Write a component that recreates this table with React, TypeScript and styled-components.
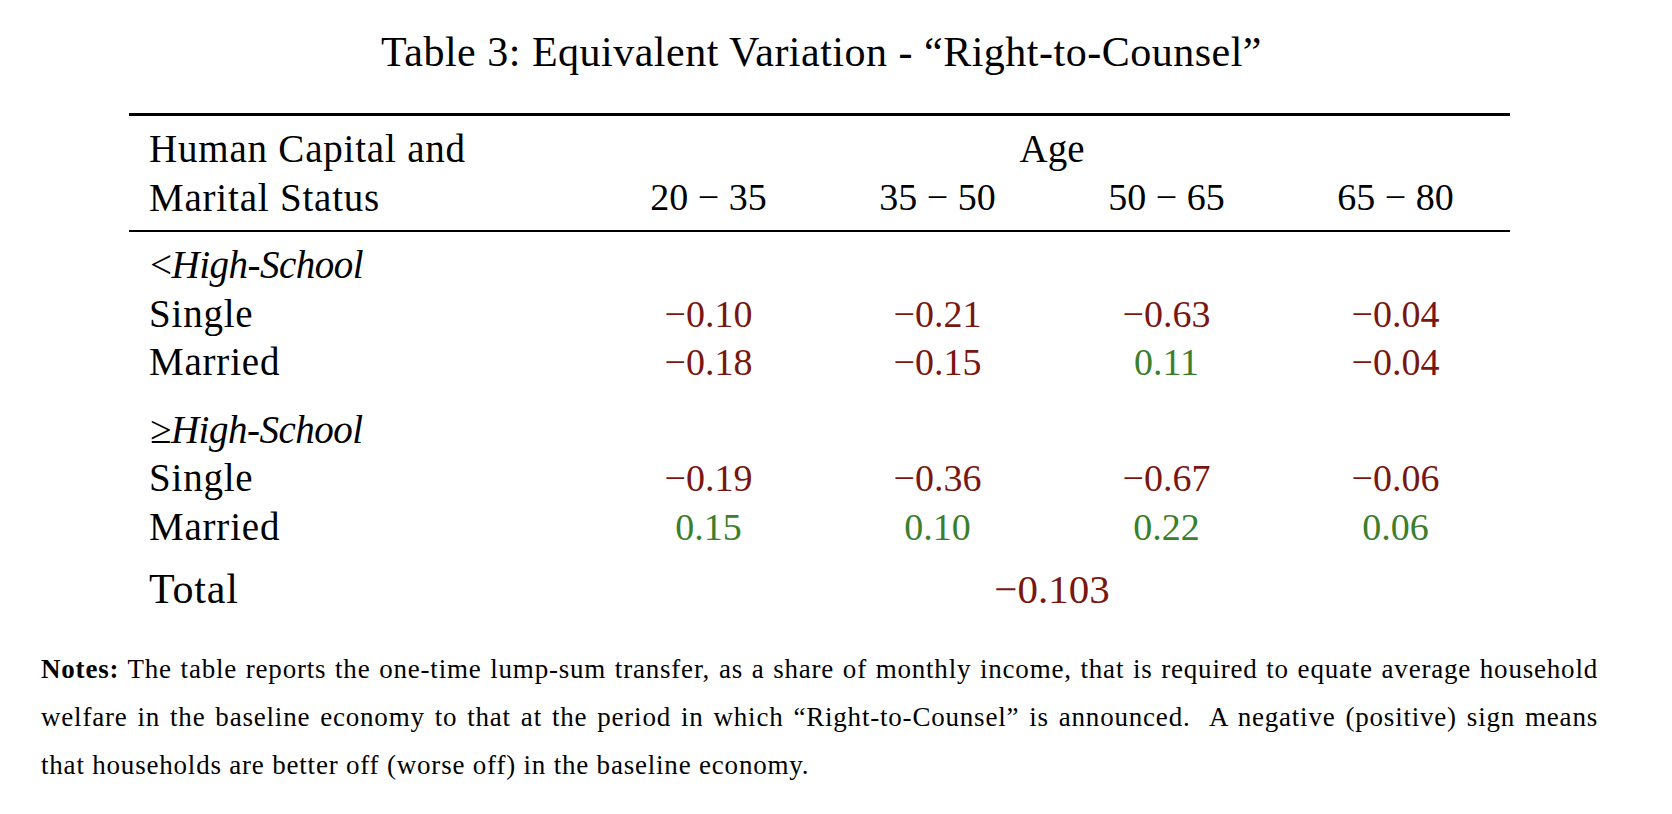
import React from "react";
import styled, { createGlobalStyle } from "styled-components";

const Global = createGlobalStyle`
  html, body { margin: 0; padding: 0; background: #ffffff; }
  body { font-family: "Liberation Serif", "Times New Roman", serif; color: #000; }
`;

const RED = "#7a1610";
const GREEN = "#3b7e2c";

const Page = styled.div`
  width: 1557px;
  margin-left: 41px;
  padding-top: 28px;
`;

const Title = styled.h1`
  margin: 0;
  font-weight: normal;
  font-size: 42px;
  letter-spacing: 0.5px;
  line-height: 48px;
  text-align: center;
  padding-left: 4px;
`;

const Table = styled.div`
  margin: 37px 88px 0;
`;

const Rule = styled.div<{ $w: number; $mt: number; $mb: number }>`
  height: ${(p) => p.$w}px;
  background: #000;
  margin-top: ${(p) => p.$mt}px;
  margin-bottom: ${(p) => p.$mb}px;
`;

const Row = styled.div<{ $h: number }>`
  display: grid;
  grid-template-columns: 465px repeat(4, 229px);
  height: ${(p) => p.$h}px;
  line-height: ${(p) => p.$h}px;
  white-space: nowrap;
`;

const Label = styled.div<{ $fs?: number }>`
  padding-left: 20px;
  font-size: ${(p) => p.$fs ?? 39}px;
  letter-spacing: 0.8px;
`;

const Group = styled(Label)`
  padding-left: 21px;
  letter-spacing: -0.5px;
`;

const Ital = styled.i`
  font-style: italic;
`;

const HeadCell = styled.div`
  text-align: center;
  font-size: 38px;
`;

const AgeCell = styled(HeadCell)`
  grid-column: 2 / span 4;
  font-size: 39px;
`;

const Num = styled.div<{ $neg: boolean }>`
  text-align: center;
  font-size: 38px;
  color: ${(p) => (p.$neg ? RED : GREEN)};
`;

const TotalNum = styled.div`
  grid-column: 2 / span 4;
  text-align: center;
  font-size: 41px;
  color: ${RED};
`;

const Spacer = styled.div<{ $h: number }>`
  height: ${(p) => p.$h}px;
`;

const Notes = styled.div`
  margin-top: 30px;
  font-size: 27px;
  letter-spacing: 0.8px;
  line-height: 48px;
`;

const NoteLine = styled.div<{ $justify?: boolean }>`
  text-align: ${(p) => (p.$justify ? "justify" : "left")};
  text-align-last: ${(p) => (p.$justify ? "justify" : "left")};
  white-space: nowrap;
`;

type Grp = { sym: string; rows: { name: string; vals: number[] }[] };

const groups: Grp[] = [
  {
    sym: "<",
    rows: [
      { name: "Single", vals: [-0.1, -0.21, -0.63, -0.04] },
      { name: "Married", vals: [-0.18, -0.15, 0.11, -0.04] },
    ],
  },
  {
    sym: "≥",
    rows: [
      { name: "Single", vals: [-0.19, -0.36, -0.67, -0.06] },
      { name: "Married", vals: [0.15, 0.1, 0.22, 0.06] },
    ],
  },
];

const fmt = (v: number, d = 2) =>
  (v < 0 ? "\u2212" : "") + Math.abs(v).toFixed(d);

const ages = ["20 \u2212 35", "35 \u2212 50", "50 \u2212 65", "65 \u2212 80"];

export default function App() {
  return (
    <>
      <Global />
      <Page>
        <Title>Table 3: Equivalent Variation - “Right-to-Counsel”</Title>
        <Table>
          <Rule $w={3} $mt={0} $mb={8} />
          <Row $h={49}>
            <Label>Human Capital and</Label>
            <AgeCell>Age</AgeCell>
          </Row>
          <Row $h={49}>
            <Label>Marital Status</Label>
            {ages.map((a) => (
              <HeadCell key={a}>{a}</HeadCell>
            ))}
          </Row>
          <Rule $w={2} $mt={8} $mb={9} />
          {groups.map((g, gi) => (
            <React.Fragment key={gi}>
              {gi > 0 && <Spacer $h={19} />}
              <Row $h={48.5}>
                <Group>
                  {g.sym}
                  <Ital>High-School</Ital>
                </Group>
              </Row>
              {g.rows.map((r) => (
                <Row $h={48.5} key={r.name}>
                  <Label>{r.name}</Label>
                  {r.vals.map((v, i) => (
                    <Num key={i} $neg={v < 0}>
                      {fmt(v)}
                    </Num>
                  ))}
                </Row>
              ))}
            </React.Fragment>
          ))}
          <Spacer $h={11.5} />
          <Row $h={52}>
            <Label $fs={42}>Total</Label>
            <TotalNum>{fmt(-0.103, 3)}</TotalNum>
          </Row>
        </Table>
        <Notes>
          <NoteLine $justify>
            <b>Notes:</b> The table reports the one-time lump-sum transfer, as a share of monthly
            income, that is required to equate average household
          </NoteLine>
          <NoteLine $justify>
            welfare in the baseline economy to that at the period in which “Right-to-Counsel” is
            announced.&nbsp; A negative (positive) sign means
          </NoteLine>
          <NoteLine>that households are better off (worse off) in the baseline economy.</NoteLine>
        </Notes>
      </Page>
    </>
  );
}
